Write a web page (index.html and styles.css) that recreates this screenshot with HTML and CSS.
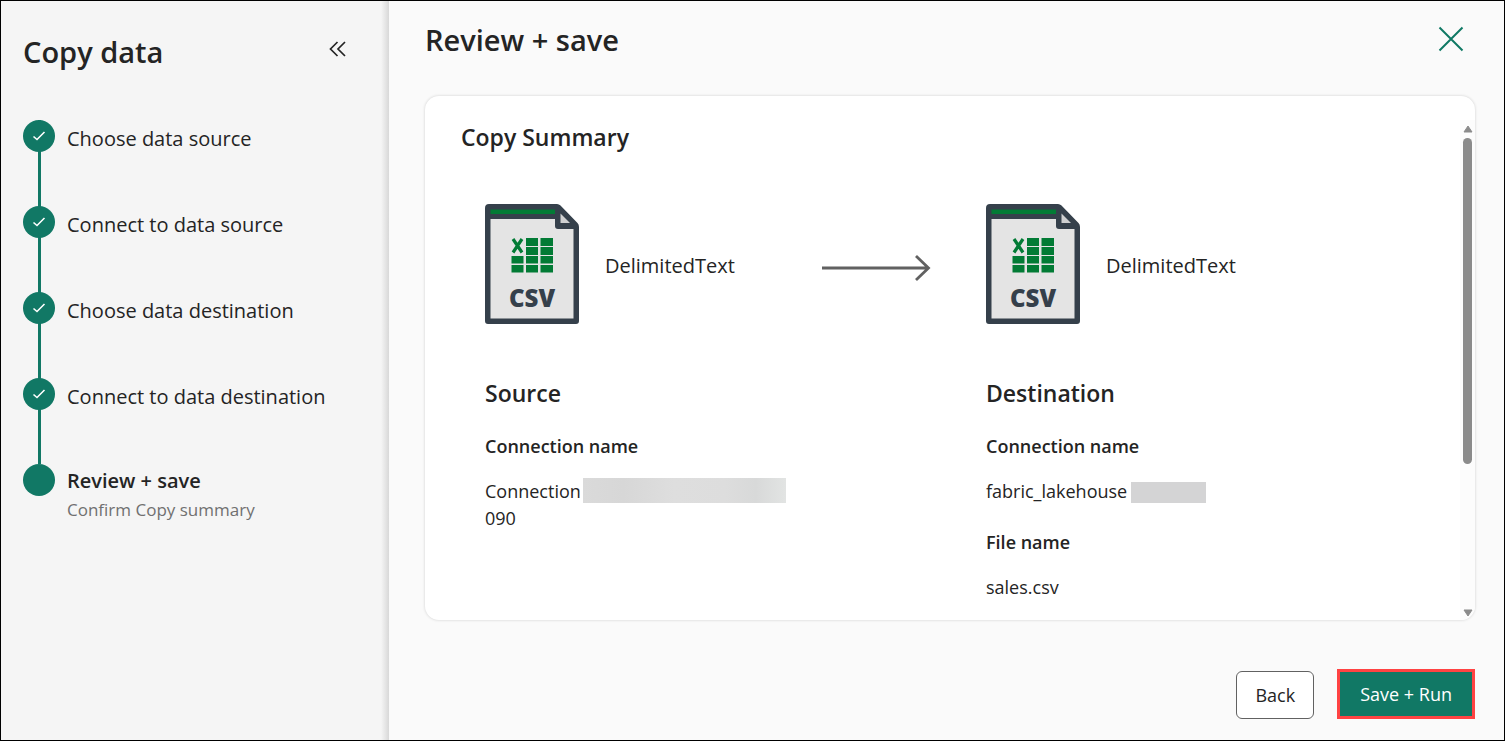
FILE: index.html
```
<!DOCTYPE html>
<html lang="en">
<head>
<meta charset="utf-8">
<title>Copy data</title>
<link rel="stylesheet" href="styles.css">
</head>
<body>
<div class="app">
  <aside class="sidebar">
    <header class="side-head">
      <h1 class="heading">Copy data</h1>
      <button class="icon-button collapse" aria-label="Collapse">
        <svg width="18" height="16" viewBox="0 0 18 16"><path d="M8.500 1 1.500 8 8.500 15M16 1 9 8 16 15" fill="none" stroke="#242424" stroke-width="1.700"/></svg>
      </button>
    </header>
    <ol class="steps">
      <li class="step"><span class="dot"><svg width="14" height="12" viewBox="0 0 14 12"><path class="check" d="M1.500 6.500 5 9.500 12.500 2"/></svg></span><span class="step-name">Choose data source</span></li>
      <li class="step"><span class="dot"><svg width="14" height="12" viewBox="0 0 14 12"><path class="check" d="M1.500 6.500 5 9.500 12.500 2"/></svg></span><span class="step-name">Connect to data source</span></li>
      <li class="step"><span class="dot"><svg width="14" height="12" viewBox="0 0 14 12"><path class="check" d="M1.500 6.500 5 9.500 12.500 2"/></svg></span><span class="step-name">Choose data destination</span></li>
      <li class="step"><span class="dot"><svg width="14" height="12" viewBox="0 0 14 12"><path class="check" d="M1.500 6.500 5 9.500 12.500 2"/></svg></span><span class="step-name">Connect to data destination</span></li>
      <li class="step current"><span class="dot"></span><span class="step-name">Review + save<small class="step-note">Confirm Copy summary</small></span></li>
    </ol>
  </aside>
  <main class="main">
    <header class="main-head">
      <h2 class="heading">Review + save</h2>
      <button class="icon-button" aria-label="Close">
        <svg width="26" height="26" viewBox="0 0 26 26"><path d="M1.500 1.500 24.500 24.500M24.500 1.500 1.500 24.500" stroke="#0f7864" stroke-width="2"/></svg>
      </button>
    </header>
    <section class="card">
      <div class="content">
        <h3 class="subheading">Copy Summary</h3>
        <div class="summary">
          <div class="endpoint">
            <svg width="94" height="120" viewBox="0 0 94 120">
              <path d="M4 0H72Q74 0 75.500 1.500L92.500 19Q94 20.500 94 23V117Q94 120 91 120H3Q0 120 0 117V4Q0 0 4 0Z" fill="#35404b"/>
              <path d="M5.500 15H70V22Q70 25 73 25H88.500V114.500H5.500Z" fill="#e4e4e4"/>
              <path d="M5.500 5.500H70V10H5.500Z" fill="#027b35"/>
              <path d="M75.500 9.500 85 19H75.500Z" fill="#cfd0d1"/>
              <path d="M41 34h12v8H41zM55.500 34H68v8H55.500zM41 43h12v8H41zM55.500 43H68v8H55.500zM26.500 52H38.500v7.500H26.500zM41 52h12v7.500H41zM55.500 52H68v7.500H55.500zM26.500 61H38.500v7.500H26.500zM41 61h12v7.500H41zM55.500 61H68v7.500H55.500z" fill="#027b35"/>
              <path d="M28 35 37 48.500M37 35 28 48.500" stroke="#027b35" stroke-width="3.200"/>
              <text class="csv-text" x="47" y="103" text-anchor="middle">CSV</text>
            </svg>
            <span>DelimitedText</span>
          </div>
          <svg class="arrow" width="109" height="28" viewBox="0 0 109 28"><path d="M0 14H107M94 2 106.500 14 94 26" fill="none" stroke="#616161" stroke-width="2.800"/></svg>
          <div class="endpoint">
            <svg width="94" height="120" viewBox="0 0 94 120">
              <path d="M4 0H72Q74 0 75.500 1.500L92.500 19Q94 20.500 94 23V117Q94 120 91 120H3Q0 120 0 117V4Q0 0 4 0Z" fill="#35404b"/>
              <path d="M5.500 15H70V22Q70 25 73 25H88.500V114.500H5.500Z" fill="#e4e4e4"/>
              <path d="M5.500 5.500H70V10H5.500Z" fill="#027b35"/>
              <path d="M75.500 9.500 85 19H75.500Z" fill="#cfd0d1"/>
              <path d="M41 34h12v8H41zM55.500 34H68v8H55.500zM41 43h12v8H41zM55.500 43H68v8H55.500zM26.500 52H38.500v7.500H26.500zM41 52h12v7.500H41zM55.500 52H68v7.500H55.500zM26.500 61H38.500v7.500H26.500zM41 61h12v7.500H41zM55.500 61H68v7.500H55.500z" fill="#027b35"/>
              <path d="M28 35 37 48.500M37 35 28 48.500" stroke="#027b35" stroke-width="3.200"/>
              <text class="csv-text" x="47" y="103" text-anchor="middle">CSV</text>
            </svg>
            <span>DelimitedText</span>
          </div>
          <div class="details source">
            <h3 class="subheading">Source</h3>
            <dl class="fields">
              <dt>Connection name</dt>
              <dd>Connection<span class="redacted long"></span> 090</dd>
            </dl>
          </div>
          <div class="details">
            <h3 class="subheading">Destination</h3>
            <dl class="fields">
              <dt>Connection name</dt>
              <dd>fabric_lakehouse<span class="redacted"></span></dd>
              <dt>File name</dt>
              <dd>sales.csv</dd>
            </dl>
          </div>
        </div>
      </div>
      <div class="scrollbar" aria-hidden="true">
        <svg width="10" height="8" viewBox="0 0 10 8"><path d="M5 1 9 7H1Z" fill="#8b8b8b" stroke="#8b8b8b" stroke-linejoin="round"/></svg>
        <div class="track"><div class="thumb"></div></div>
        <svg width="10" height="8" viewBox="0 0 10 8"><path d="M5 7 9 1H1Z" fill="#8b8b8b" stroke="#8b8b8b" stroke-linejoin="round"/></svg>
      </div>
    </section>
    <footer class="actions">
      <button class="button">Back</button>
      <button class="button primary">Save + Run</button>
    </footer>
  </main>
</div>
</body>
</html>
```
FILE: styles.css
```
* { box-sizing: border-box; }
body {
  margin: 0;
  font-family: "Open Sans", "Noto Sans", sans-serif;
  font-size: 18px;
  line-height: 27px;
  color: #242424;
}
h1, h2, h3, ol, dl, dd { margin: 0; padding: 0; }
button { font: inherit; color: inherit; cursor: pointer; }
svg { display: block; }
.app {
  display: flex;
  min-height: 100vh;
  border: 1px solid #000;
  background: #fafafa;
}
.sidebar {
  width: 388px;
  flex: none;
  padding: 31px 42px 32px 22px;
  background: linear-gradient(to left, #d8d8d8, #f5f5f5 8px);
}
.side-head, .main-head { display: flex; justify-content: space-between; }
.heading { font-size: 29px; line-height: 40px; font-weight: 600; }
.icon-button { padding: 0; border: 0; background: none; }
.collapse { height: 34px; }
.steps { list-style: none; padding-top: 48px; }
.step {
  display: flex;
  gap: 12px;
  height: 86px;
  font-size: 20px;
}
.step:not(.current) {
  background: linear-gradient(#117865, #117865) 15px 0 / 3px 100% no-repeat;
}
.dot {
  display: grid;
  place-items: center;
  flex: none;
  width: 32px;
  height: 32px;
  border-radius: 50%;
  background: #117865;
}
.check { fill: none; stroke: #fff; stroke-width: 1.6; }
.step-name { padding-top: 5px; white-space: nowrap; }
.current .step-name { padding-top: 3px; font-weight: 600; }
.step-note {
  display: block;
  padding-top: 2px;
  font-size: 17px;
  font-weight: 400;
  color: #707070;
}
.main {
  display: flex;
  flex-direction: column;
  flex: 1;
  min-width: 0;
  padding: 19px 29px 21px 36px;
}
.main-head { padding: 0 11px 36px 0; }
.main-head .icon-button { height: 38px; }
.card {
  display: flex;
  flex: 1;
  background: #fff;
  border-radius: 14px;
  box-shadow: 0 0 3px rgba(0, 0, 0, 0.18);
  overflow: hidden;
}
.content { flex: 1; padding: 26px 9px 8px 36px; }
.subheading { font-size: 23px; line-height: 30px; font-weight: 600; }
.summary {
  display: grid;
  grid-template-columns: 337fr 164fr 465fr;
  row-gap: 54px;
  padding: 52px 0 0 24px;
}
.endpoint { display: flex; gap: 26px; font-size: 20px; }
.endpoint span { padding-top: 48px; }
.arrow { align-self: center; margin-top: 8px; }
.source { grid-column: 1 / 3; padding-right: 190px; }
.fields { padding-top: 25px; }
.fields dt { font-weight: 600; }
.fields dd { padding: 18px 0 24px; }
.fields dd:last-child { padding-bottom: 0; }
.redacted {
  display: inline-block;
  width: 75px;
  height: 21px;
  margin-left: 4px;
  vertical-align: text-bottom;
  background: #d4d4d5;
}
.redacted.long {
  width: 203px;
  height: 25px;
  margin: 0 0 0 2px;
  background: linear-gradient(90deg, #dadada, #d7d7d7 20%, #dedede 45%, #dddddd 70%, #d8d9d9 85%, #e2e4e3);
}
.scrollbar {
  display: flex;
  flex-direction: column;
  align-items: center;
  gap: 5px;
  width: 15px;
  margin-top: 24px;
  padding: 5px 0 3px;
  background: #fcfcfc;
}
.track { flex: 1; width: 9px; }
.thumb { height: 70%; border-radius: 5px; background: #8b8b8b; }
.actions {
  display: flex;
  justify-content: flex-end;
  align-items: flex-end;
  gap: 23px;
  padding-top: 49px;
}
.button {
  height: 48px;
  padding: 0 18px;
  border: 1px solid #616161;
  border-radius: 6px;
  background: #fff;
}
.primary {
  height: 50px;
  padding: 0 20px;
  border: 3px solid #ff4343;
  border-radius: 0;
  background: #117865;
  color: #fff;
}
.csv-text { font: 800 24px "Open Sans", sans-serif; fill: #35404b; }
```
